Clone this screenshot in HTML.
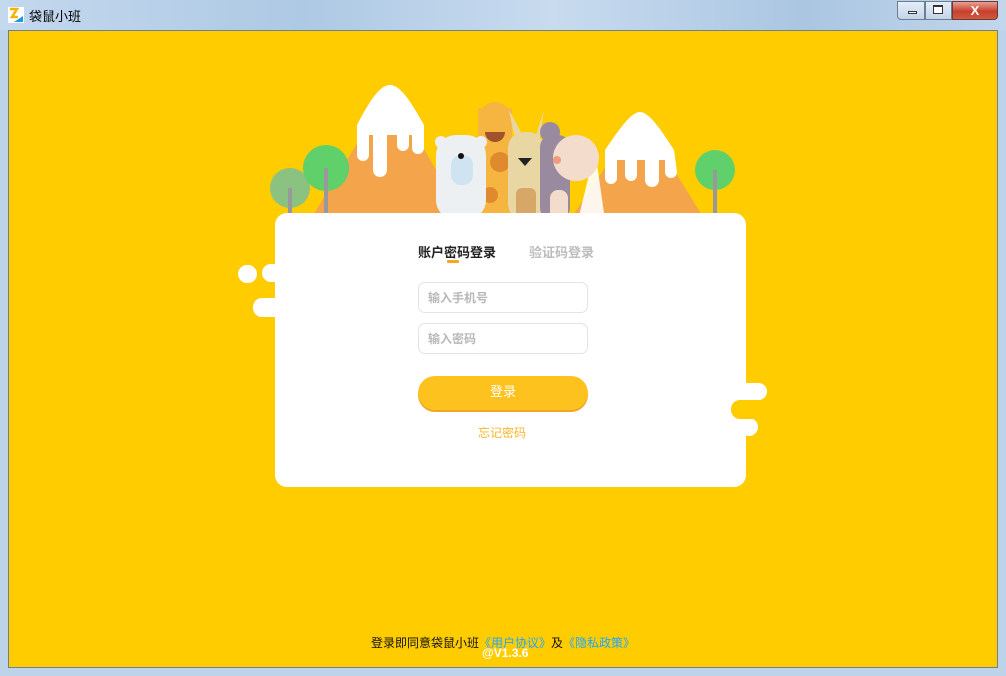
<!DOCTYPE html>
<html><head><meta charset="utf-8"><style>
*{margin:0;padding:0;box-sizing:border-box}
body{width:1006px;height:676px;overflow:hidden;background:#bcd3ea;font-family:"Liberation Sans","Noto Sans CJK SC",sans-serif;position:relative}
.tb{position:absolute;left:0;top:0;width:1006px;height:30px;background:linear-gradient(90deg,#c4d8ee,#aec9e4 30%,#c8dbef 55%,#abc6e2 80%,#c2d6ec)}
.title{position:absolute;left:29px;top:6px;font-size:13px;color:#000}
.main{position:absolute;left:8px;top:30px;width:990px;height:638px;background:#ffcc00;border:1px solid #6e7f92}
.card{position:absolute;left:275px;top:213px;width:471px;height:274px;background:#fff;border-radius:12px}
.w{position:absolute;background:#fff;border-radius:10px}
.y{position:absolute;background:#ffcc00;border-radius:10px}
.tab{position:absolute;top:242px;font-size:13px;font-weight:bold}
.inp{position:absolute;left:418px;width:170px;height:31px;border:1px solid #e3e3e3;border-radius:7px;font-size:12px;color:#b8b8b8;padding:6px 0 0 9px;font-weight:bold}
.btn{position:absolute;left:418px;top:376px;width:170px;height:34px;border-radius:17px;background:#fec21e;box-shadow:0 2px 0 #f0a428;color:#fff;font-size:13px;text-align:center;line-height:32px}
</style></head><body>
<div class="tb"></div>
<svg style="position:absolute;left:8px;top:7px" width="16" height="16"><rect x="0" y="0" width="16" height="16" fill="#fff"/><path d="M2 2h7l-5 8h6" stroke="#f5b400" stroke-width="2.5" fill="none"/><path d="M6 15l9-6v6z" fill="#1e9be0"/></svg>
<div class="title">袋鼠小班</div>
<div style="position:absolute;left:897px;top:1px;width:28px;height:19px;border:1px solid #6d7e94;border-radius:0 0 0 4px;background:linear-gradient(#e5eef8,#c3d4e8)"></div>
<div style="position:absolute;left:908px;top:11px;width:9px;height:3px;border:1px solid #333;background:#fff"></div>
<div style="position:absolute;left:925px;top:1px;width:27px;height:19px;border:1px solid #6d7e94;background:linear-gradient(#e5eef8,#c3d4e8)"></div>
<div style="position:absolute;left:933px;top:5px;width:10px;height:9px;border:1px solid #333;border-top-width:2px;background:#fff"></div>
<div style="position:absolute;left:952px;top:1px;width:46px;height:19px;border:1px solid #6b3a33;border-radius:0 0 4px 0;background:linear-gradient(#e8a093,#c7402c 55%,#d05a40);color:#fff;font-weight:bold;font-size:13px;text-align:center;line-height:17px">X</div>
<div class="main"></div>
<svg style="position:absolute;left:260px;top:80px" width="480" height="140" viewBox="0 0 480 140">
<polygon points="50,140 130,10 205,140" fill="#f4a54b"/>
<path d="M130,5 C120,5 110,20 97,45 L97,75 a6,6 0 0 0 12,0 L109,55 L113,55 L113,90 a7,7 0 0 0 14,0 L127,55 L137,55 L137,65 a6,6 0 0 0 12,0 L149,55 L152,55 L152,68 a6,6 0 0 0 12,0 L164,45 C150,20 140,5 130,5Z" fill="#fff"/>
<polygon points="310,140 380,35 445,140" fill="#f4a54b"/>
<path d="M380,32 C372,32 362,45 345,70 L345,98 a6,6 0 0 0 12,0 L357,80 L365,80 L365,95 a6,6 0 0 0 12,0 L377,80 L385,80 L385,100 a7,7 0 0 0 14,0 L399,80 L405,80 L405,92 a6,6 0 0 0 12,0 L414,70 C398,45 388,32 380,32Z" fill="#fff"/>
<path d="M318,140 L335,70 L345,140Z" fill="#fff" opacity=".9"/>
<circle cx="30" cy="108" r="20" fill="#8bc181"/><rect x="28" y="108" width="4" height="32" fill="#999"/>
<circle cx="66" cy="88" r="23" fill="#5fd06a"/><rect x="64" y="88" width="4" height="52" fill="#999"/>
<circle cx="455" cy="90" r="20" fill="#5fd06a"/><rect x="453" y="90" width="4" height="50" fill="#999"/>
<rect x="218" y="28" width="34" height="112" fill="#f6b540"/>
<circle cx="235" cy="38" r="16" fill="#f6b540"/><circle cx="240" cy="82" r="10" fill="#e08a2f"/><circle cx="230" cy="115" r="8" fill="#e08a2f"/>
<path d="M225,52 h20 a10,10 0 0 1 -20,0z" fill="#a0522d"/>
<rect x="176" y="55" width="50" height="85" rx="20" fill="#ecf0f3"/><circle cx="181" cy="62" r="6" fill="#ecf0f3"/><circle cx="221" cy="62" r="6" fill="#ecf0f3"/>
<rect x="191" y="75" width="22" height="30" rx="10" fill="#cfe3f0"/><circle cx="201" cy="76" r="3" fill="#111"/>
<rect x="248" y="52" width="36" height="88" rx="16" fill="#e9d7a3"/><path d="M254,55 l-5,-25 l12,22z M276,55 l8,-25 l-4,27z" fill="#e9d7a3"/>
<rect x="256" y="108" width="20" height="30" rx="6" fill="#d7a767"/><path d="M258,78 h14 l-7,8z" fill="#222"/>
<rect x="280" y="55" width="30" height="85" rx="12" fill="#9a8aa0"/><circle cx="290" cy="52" r="10" fill="#9a8aa0"/>
<rect x="290" y="110" width="18" height="30" rx="8" fill="#f3dccb"/>
<circle cx="316" cy="78" r="23" fill="#f3dccb"/><circle cx="297" cy="80" r="4" fill="#f29a80"/>
</svg>
<div class="w" style="left:238px;top:265px;width:19px;height:18px;border-radius:9px"></div>
<div class="w" style="left:262px;top:264px;width:29px;height:18px;border-radius:9px"></div>
<div class="w" style="left:253px;top:298px;width:30px;height:19px;border-radius:9px"></div>
<div class="w" style="left:733px;top:383px;width:34px;height:17px;border-radius:9px"></div>
<div class="w" style="left:740px;top:418px;width:18px;height:18px;border-radius:9px"></div>
<div class="card"></div>
<div class="y" style="left:731px;top:400px;width:40px;height:19px;border-radius:9px"></div>
<div class="tab" style="left:418px;color:#222">账户密码登录</div>
<div style="position:absolute;left:447px;top:260px;width:12px;height:3px;background:#f5a623;border-radius:1px"></div>
<div class="tab" style="left:529px;color:#bdbdbd">验证码登录</div>
<div class="inp" style="top:282px">输入手机号</div>
<div class="inp" style="top:323px">输入密码</div>
<div class="btn">登录</div>
<div style="position:absolute;left:478px;top:424px;font-size:12px;color:#f7b52c">忘记密码</div>
<div style="position:absolute;left:371px;top:634px;font-size:12px;color:#111;white-space:nowrap">登录即同意袋鼠小班<span style="color:#1fa6ff">《用户协议》</span>及<span style="color:#1fa6ff">《隐私政策》</span></div>
<div style="position:absolute;left:482px;top:646px;font-size:12px;color:#fff;font-weight:bold">@V1.3.6</div>
</body></html>
